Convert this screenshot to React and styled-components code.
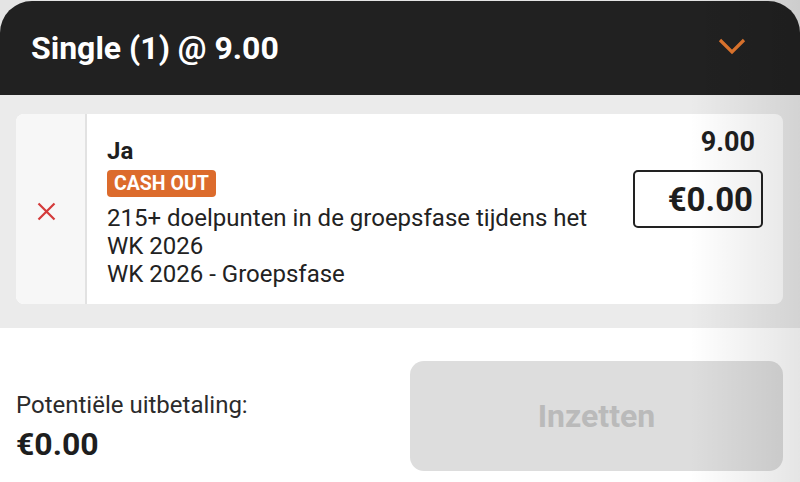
import React from 'react'
import styled, { createGlobalStyle } from 'styled-components'

const GlobalStyle = createGlobalStyle`
    html, body {
        margin: 0;
        padding: 0;
        background: #e4e4e4;
    }
    body {
        font-family: Roboto, "Noto Sans", "Liberation Sans", sans-serif;
        color: #1e1e1e;
    }
`

const Sheet = styled.div`
    position: relative;
    width: 800px;
    height: 482px;
    overflow: hidden;
    display: flex;
    flex-direction: column;
    padding-top: 1px;
    box-sizing: border-box;
`

const Shade = styled.div`
    position: absolute;
    top: 0;
    right: 0;
    width: 110px;
    height: 100%;
    pointer-events: none;
    background: linear-gradient(to right, rgba(0, 0, 0, 0), rgba(0, 0, 0, 0.1));
`

const Header = styled.div`
    flex: 0 0 94px;
    display: flex;
    align-items: center;
    justify-content: space-between;
    background: #212121;
    border-radius: 32px 32px 0 0;
    padding: 0 54px 0 31px;
    svg {
        margin-bottom: 4px;
    }
`

const Title = styled.h1`
    margin: 0;
    font-size: 32px;
    font-weight: 700;
    color: #fff;
    line-height: 38px;
`

const Body = styled.div`
    flex: 0 0 233px;
    background: #ebebeb;
    padding: 19px 17px 0 16px;
    box-sizing: border-box;
`

const Card = styled.div`
    display: flex;
    height: 190px;
    background: #fff;
    border-radius: 8px;
    overflow: hidden;
`

const RemoveCol = styled.div`
    flex: 0 0 71px;
    display: flex;
    align-items: center;
    justify-content: center;
    background: #f7f7f7;
    border-right: 2px solid #e2e2e2;
    padding: 4px 8px 0 0;
    box-sizing: border-box;
`

const Info = styled.div`
    flex: 1;
    display: flex;
    flex-direction: column;
    align-items: flex-start;
    padding: 22px 0 0 20px;
`

const Pick = styled.div`
    font-size: 24px;
    font-weight: 700;
    line-height: 30px;
`

const Badge = styled.span`
    margin-top: 4px;
    background: #dc6b2c;
    color: #fff;
    font-size: 19.5px;
    font-weight: 700;
    line-height: 27px;
    padding: 0 7px 0 7px;
    border-radius: 4px;
`

const Market = styled.div`
    margin-top: 7px;
    font-size: 24px;
    line-height: 28px;
    color: #222;
`

const StakeCol = styled.div`
    flex: 0 0 auto;
    display: flex;
    flex-direction: column;
    align-items: flex-end;
    padding: 12px 20px 0 0;
`

const Odds = styled.div`
    font-size: 27px;
    font-weight: 700;
    line-height: 32px;
    margin-right: 8px;
`

const StakeBox = styled.div`
    margin-top: 12px;
    width: 130px;
    height: 58px;
    box-sizing: border-box;
    border: 2px solid #222;
    border-radius: 5px;
    display: flex;
    align-items: center;
    justify-content: flex-end;
    padding-right: 8px;
    font-size: 33px;
    font-weight: 700;
`

const Footer = styled.div`
    flex: 1;
    background: #fff;
    display: flex;
    justify-content: space-between;
    padding: 33px 17px 11px 16px;
`

const Payout = styled.div`
    display: flex;
    flex-direction: column;
    justify-content: flex-end;
    padding-bottom: 8px;
`

const PayoutLabel = styled.div`
    font-size: 24px;
    line-height: 28px;
    color: #2b2b2b;
`

const PayoutValue = styled.div`
    margin-top: 6px;
    font-size: 32px;
    font-weight: 700;
    line-height: 38px;
`

const PlaceButton = styled.button`
    width: 373px;
    border: none;
    border-radius: 14px;
    background: #dddddd;
    color: #bababa;
    font-family: inherit;
    font-size: 32px;
    font-weight: 700;
`

const Chevron = () => (
    <svg width="28" height="18" viewBox="0 0 28 18">
        <path d="M2 3 L14 15 L26 3" fill="none" stroke="#e0762e" strokeWidth="3.2" />
    </svg>
)

const Cross = () => (
    <svg width="19" height="19" viewBox="0 0 19 19">
        <path d="M1.5 1.5 L17.5 17.5 M17.5 1.5 L1.5 17.5" stroke="#d43a3a" strokeWidth="2.2" />
    </svg>
)

const App = () => {
    return (
        <Sheet>
            <GlobalStyle />
            <Header>
                <Title>Single (1) @ 9.00</Title>
                <Chevron />
            </Header>
            <Body>
                <Card>
                    <RemoveCol>
                        <Cross />
                    </RemoveCol>
                    <Info>
                        <Pick>Ja</Pick>
                        <Badge>CASH OUT</Badge>
                        <Market>
                            215+ doelpunten in de groepsfase tijdens het<br />
                            WK 2026<br />
                            WK 2026 - Groepsfase
                        </Market>
                    </Info>
                    <StakeCol>
                        <Odds>9.00</Odds>
                        <StakeBox>€0.00</StakeBox>
                    </StakeCol>
                </Card>
            </Body>
            <Footer>
                <Payout>
                    <PayoutLabel>Potentiële uitbetaling:</PayoutLabel>
                    <PayoutValue>€0.00</PayoutValue>
                </Payout>
                <PlaceButton>Inzetten</PlaceButton>
            </Footer>
            <Shade />
        </Sheet>
    )
}

export default App
